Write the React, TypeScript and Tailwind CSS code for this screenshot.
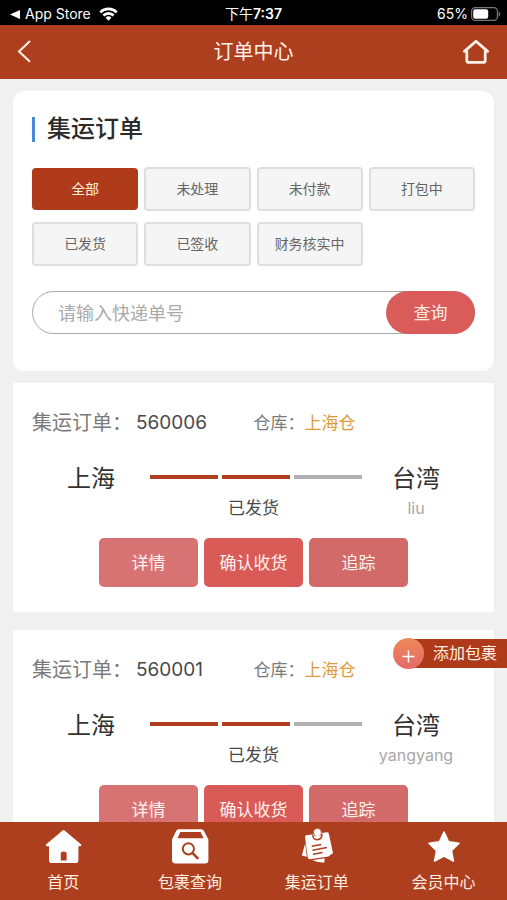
import type { ReactNode } from 'react'

const filters = ['全部', '未处理', '未付款', '打包中', '已发货', '已签收', '财务核实中']

const orders = [
  { id: '560006', warehouse: '上海仓', from: '上海', to: '台湾', receiver: 'liu', status: '已发货' },
  { id: '560001', warehouse: '上海仓', from: '上海', to: '台湾', receiver: 'yangyang', status: '已发货' },
]

type Order = (typeof orders)[number]

function StatusBar() {
  return (
    <div className="relative flex h-[25px] shrink-0 items-center justify-between bg-black pl-[10px] pr-[6px] pt-[3px] text-[14px] leading-[22px] text-white">
      <div className="flex items-center gap-[5px]">
        <svg width="10" height="9" viewBox="0 0 10 9" fill="currentColor">
          <path d="M0 4.5 L10 0 V9 Z" />
        </svg>
        <span className="w-[69px] whitespace-nowrap">App Store</span>
        <svg width="19" height="14" viewBox="0 0 19 14" fill="none" stroke="currentColor" strokeWidth="2.6">
          <path d="M1.3 5.3 A11.6 11.6 0 0 1 17.7 5.3" />
          <path d="M4.4 8.5 A7.2 7.2 0 0 1 14.6 8.5" />
          <path d="M9.5 13.8 L6.6 10.8 A4.1 4.1 0 0 1 12.4 10.8 Z" fill="currentColor" stroke="none" />
        </svg>
      </div>
      <div className="absolute inset-x-0 text-center">
        下午<span className="font-semibold">7:37</span>
      </div>
      <div className="flex items-center gap-[3px]">
        <span>65%</span>
        <svg width="30" height="14" viewBox="0 0 30 14">
          <rect x="0.6" y="0.6" width="25.8" height="12.8" rx="3.6" fill="none" stroke="#77777a" strokeWidth="1.2" />
          <rect x="2.2" y="2.2" width="15" height="9.6" rx="2" fill="#fff" />
          <path d="M27.6 4.6 a2.6 2.6 0 0 1 0 4.8 Z" fill="#77777a" />
        </svg>
      </div>
    </div>
  )
}

function Header() {
  return (
    <header className="grid h-[54px] shrink-0 grid-cols-3 items-center bg-[#ae3f1e] px-[17px] text-white">
      <button type="button" aria-label="返回" className="justify-self-start">
        <svg width="15" height="24" viewBox="0 0 15 24" fill="none" stroke="#fff3ea" strokeWidth="2">
          <path d="M13 1 L2 11.4 L13 21.8" />
        </svg>
      </button>
      <h1 className="text-center text-[20px] leading-[28px] text-[#fff3ea]">订单中心</h1>
      <a href="#" aria-label="首页" className="justify-self-end">
        <svg width="28" height="26" viewBox="0 0 28 26" fill="none" stroke="#fff3ea" strokeWidth="2.8" strokeLinejoin="round" strokeLinecap="round">
          <path d="M14 2.2 L2.4 12.4 H4.8 V21.4 Q4.8 23.4 6.8 23.4 H21.2 Q23.2 23.4 23.2 21.4 V12.4 H25.6 Z" />
        </svg>
      </a>
    </header>
  )
}

function SearchCard() {
  return (
    <section className="rounded-[12px] bg-white px-[19px] pb-[37px] pt-[21px]">
      <h2 className="flex items-center gap-[12px] text-[24px] font-medium leading-[34px] text-[#2b2b2b]">
        <span className="h-[25px] w-[3px] bg-[#4a88d8]" />
        集运订单
      </h2>
      <div className="mt-[21px] grid grid-cols-4 gap-x-[6px] gap-y-[11px]">
        {filters.map((name, i) => (
          <button
            key={name}
            type="button"
            className={
              i === 0
                ? 'h-[42px] self-center rounded-[4px] bg-[#ae3a1a] text-[14px] leading-[20px] text-[#ffeee2]'
                : 'h-[44px] rounded-[4px] border-2 border-[#dedede] bg-[#f5f5f5] text-[14px] leading-[20px] text-[#666666]'
            }
          >
            {name}
          </button>
        ))}
      </div>
      <form className="mt-[25px] flex h-[43px] rounded-full border border-[#a8a8a8]" onSubmit={(e) => e.preventDefault()}>
        <input
          type="text"
          aria-label="快递单号"
          placeholder="请输入快递单号"
          className="min-w-0 flex-1 bg-transparent pl-[25px] pt-[2px] text-[18px] leading-[26px] outline-none placeholder:text-[#aaaaaa]"
        />
        <button type="submit" className="-m-px w-[89px] rounded-full bg-[#d95c5a] text-[17px] leading-[24px] text-[#ffeee8]">
          查询
        </button>
      </form>
    </section>
  )
}

function OrderCard({ order }: { order: Order }) {
  return (
    <article className="bg-white px-[19px] pb-[25px] pt-[25px]">
      <div className="grid grid-cols-2 items-center leading-[30px]">
        <div className="flex text-[20px] text-[#7a7a7a]">
          <span className="w-[104px] whitespace-nowrap">集运订单：</span>
          <span className="text-[19px] text-[#4a4a4a]">{order.id}</span>
        </div>
        <div className="text-[17px] text-[#7a7a7a]">
          仓库：<span className="text-[#dc9a3c]">{order.warehouse}</span>
        </div>
      </div>

      <div className="mt-[24px] grid grid-cols-[118px_1fr_108px] pr-[5px] text-center text-[17px] leading-[24px]">
        <div className="text-[24px] leading-[34px] text-[#333333]">{order.from}</div>
        <div className="pt-[13px]">
          <div className="grid grid-cols-3 gap-[4px]">
            <span className="h-[4px] bg-[#ae3f1e]" />
            <span className="h-[4px] bg-[#ae3f1e]" />
            <span className="h-[4px] bg-[#b0b0b0]" />
          </div>
          <div className="mt-[17px] pr-[5px] text-[#4a4a4a]">{order.status}</div>
        </div>
        <div>
          <div className="text-[24px] leading-[34px] text-[#333333]">{order.to}</div>
          <div className="text-[16px] text-[#a8a8a8]">{order.receiver}</div>
        </div>
      </div>

      <div className="mt-[18px] flex justify-center gap-[6px] text-[17px] leading-[24px] text-[#fff1ec]">
        <button type="button" className="h-[49px] w-[99px] rounded-[5px] bg-[#d87374]">详情</button>
        <button type="button" className="h-[49px] w-[99px] rounded-[5px] bg-[#d95b58]">确认收货</button>
        <button type="button" className="h-[49px] w-[99px] rounded-[5px] bg-[#d16a69]">追踪</button>
      </div>
    </article>
  )
}

function AddPackage() {
  return (
    <button type="button" className="absolute right-0 top-[638px] flex h-[30px] items-center text-[16px] leading-[24px] text-[#ffeee2]">
      <span className="z-10 flex size-[31px] items-center justify-center rounded-full bg-linear-to-b from-[#ee8a55] to-[#e4696a]">
        <svg width="13" height="13" viewBox="0 0 13 13" stroke="#fff" strokeWidth="1.5" className="mt-[6px]">
          <path d="M6.5 0.5 V12.5 M0.5 6.5 H12.5" />
        </svg>
      </span>
      <span className="-ml-[16px] flex h-[29px] items-center bg-[#ae3a1a] pl-[25px] pr-[10px]">添加包裹</span>
    </button>
  )
}

function NavItem({ label, children }: { label: string; children: ReactNode }) {
  return (
    <a href="#" className="flex flex-1 flex-col items-center gap-[5px] pt-[6px]">
      <svg width="38" height="37" viewBox="0 0 38 37" fill="#fff">
        {children}
      </svg>
      <span className="text-[16px] leading-[24px] text-[#ffeee2]">{label}</span>
    </a>
  )
}

function TabBar() {
  return (
    <nav className="flex h-[78px] shrink-0 bg-[#ae3f1e]">
      <NavItem label="首页">
        <path
          fillRule="evenodd"
          d="M18.6 2.6 Q19.6 1.5 20.6 2.6 L37.2 16.6 Q38 18 36.4 18.2 H34.4 V32.2 Q34.4 35 31.6 35 H7.6 Q5 35 5 32.2 V18.2 H2.8 Q1.2 18 2 16.6 Z M16.8 32.6 H22.6 V25.6 Q22.6 23.6 19.7 23.6 Q16.8 23.6 16.8 25.6 Z"
        />
      </NavItem>
      <NavItem label="包裹查询">
        <path
          fillRule="evenodd"
          d="M7.5 1.2 H30.5 Q32 1.2 32.8 2.8 L37.4 11.4 V32 Q37.4 35.6 33.8 35.6 H4.6 Q1 35.6 1 32 V11.4 L5.2 2.8 Q6 1.2 7.5 1.2 Z M9.4 4 L6.4 10.2 H32.6 L29.6 4 Z"
        />
        <circle cx="17.4" cy="20.8" r="5.6" fill="none" stroke="#ae3f1e" strokeWidth="2" />
        <path d="M21.4 24.8 L27.2 30.8" stroke="#ae3f1e" strokeWidth="2.6" />
      </NavItem>
      <NavItem label="集运订单">
        <path d="M7.2 15.6 L3.8 27.6 L8.8 28.8 Z" />
        <path d="M14.4 32.2 L26.8 30.2 L26.2 34.8 Q20 34.6 14.4 32.2 Z" />
        <path d="M8.4 7.2 L29 4.2 Q30.4 4 30.8 5.4 L35 25.2 Q32.2 26.4 30.6 28.6 L11.8 31.2 Q10.2 31.2 9.8 29.8 L7 9 Q7 7.4 8.4 7.2 Z" />
        <path d="M13.8 18.2 L23.2 16.4 M14.4 22.2 L29 19.4 M15 26.2 L24.6 24.4" fill="none" stroke="#ae3f1e" strokeWidth="1.5" />
        <path d="M15 6.6 Q14.4 11.6 19.2 11.8 Q24.2 11.4 24 5.8" fill="none" stroke="#ae3f1e" strokeWidth="1.5" />
        <circle cx="19.4" cy="4.4" r="4" stroke="#ae3f1e" strokeWidth="0.7" />
        <path d="M17.6 7 L21.6 6.6 L21.2 10 L18.4 10.2 Z" />
      </NavItem>
      <NavItem label="会员中心">
        <path
          d="M19 4 L23.6 13.8 L34 15.2 L26.4 22.6 L28.4 33 L19 28 L9.6 33 L11.6 22.6 L4 15.2 L14.4 13.8 Z"
          stroke="#fff"
          strokeWidth="1.6"
          strokeLinejoin="round"
        />
      </NavItem>
    </nav>
  )
}

export default function App() {
  return (
    <div className="relative flex h-screen flex-col overflow-hidden bg-[#f0f0f0] font-['Inter','Noto_Sans_CJK_SC',sans-serif]">
      <StatusBar />
      <Header />
      <main className="min-h-0 flex-1 overflow-y-auto px-[13px] pt-[12px] [scrollbar-width:none]">
        <SearchCard />
        <div className="mt-[12px] flex flex-col gap-[18px]">
          {orders.map((order) => (
            <OrderCard key={order.id} order={order} />
          ))}
        </div>
      </main>
      <AddPackage />
      <TabBar />
    </div>
  )
}
